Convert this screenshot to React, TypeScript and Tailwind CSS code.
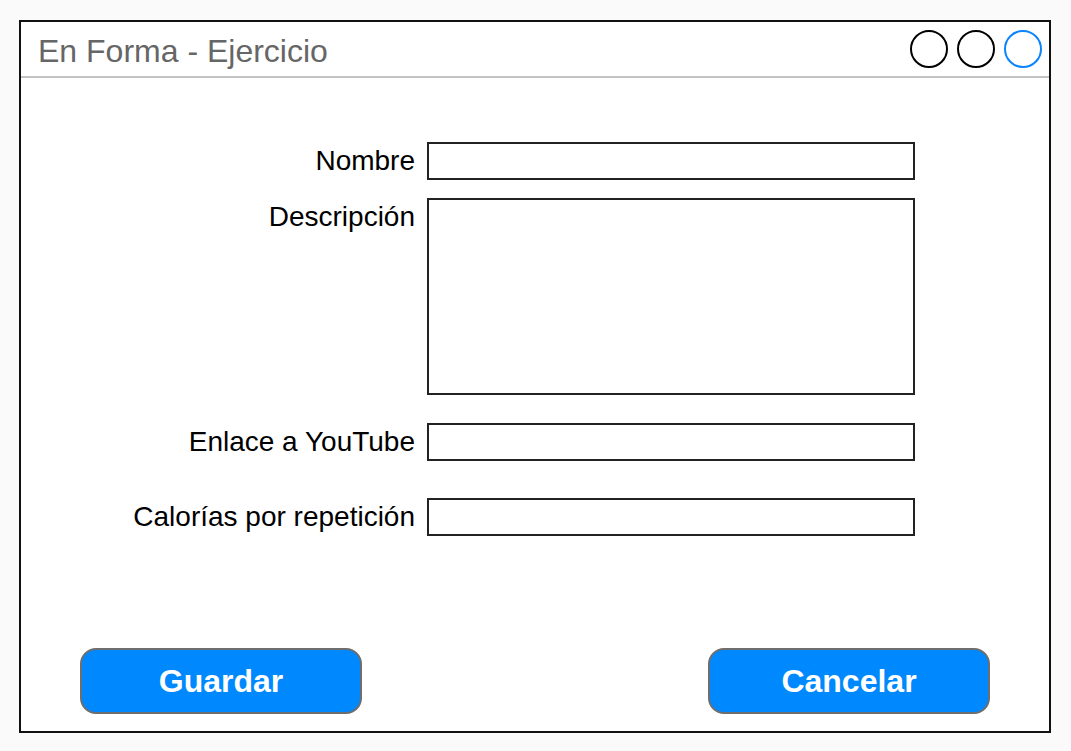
export default function App() {
  const fields = [
    { label: 'Nombre', h: 'h-[38px]', mt: 'mt-0', top: false },
    { label: 'Descripción', h: 'h-[197px]', mt: 'mt-[18px]', top: true },
    { label: 'Enlace a YouTube', h: 'h-[38px]', mt: 'mt-[28px]', top: false },
    { label: 'Calorías por repetición', h: 'h-[38px]', mt: 'mt-[37px]', top: false },
  ]

  return (
    <div
      className="min-h-[751px] w-[1071px] bg-[#fafafa] pl-[19px] pt-[20px]"
      style={{ fontFamily: '"Liberation Sans", Arial, sans-serif' }}
    >
      <div className="flex h-[713px] w-[1032px] flex-col border-2 border-[#111] bg-white">
        {/* Title bar */}
        <div className="flex h-[56px] items-center justify-between border-b-2 border-[#c4c4c4] pl-[17px] pr-[7px]">
          <div className="pt-[3px] text-[32px] text-[#666]">En Forma - Ejercicio</div>
          <div className="flex gap-[9px]">
            <div className="h-[38px] w-[38px] rounded-full border-2 border-black" />
            <div className="h-[38px] w-[38px] rounded-full border-2 border-black" />
            <div className="h-[38px] w-[38px] rounded-full border-2 border-[#0a84ff]" />
          </div>
        </div>

        {/* Form */}
        <div className="flex flex-1 flex-col pt-[64px]">
          {fields.map((f) => (
            <div key={f.label} className={`flex ${f.mt}`}>
              <div
                className={`flex w-[394px] justify-end text-[28px] leading-[32px] text-black ${
                  f.top ? 'items-start pt-[3px]' : 'h-[38px] items-center'
                }`}
              >
                {f.label}
              </div>
              <div className={`ml-[12px] w-[488px] border-2 border-[#222] bg-white ${f.h}`} />
            </div>
          ))}

          {/* Buttons */}
          <div className="mt-[112px] flex justify-between px-[59px]">
            <button className="flex h-[66px] w-[282px] items-center justify-center rounded-[16px] border-2 border-[#6e6e6e] bg-[#0088ff] text-[32px] font-bold text-white">
              Guardar
            </button>
            <button className="flex h-[66px] w-[282px] items-center justify-center rounded-[16px] border-2 border-[#6e6e6e] bg-[#0088ff] text-[32px] font-bold text-white">
              Cancelar
            </button>
          </div>
        </div>
      </div>
    </div>
  )
}
